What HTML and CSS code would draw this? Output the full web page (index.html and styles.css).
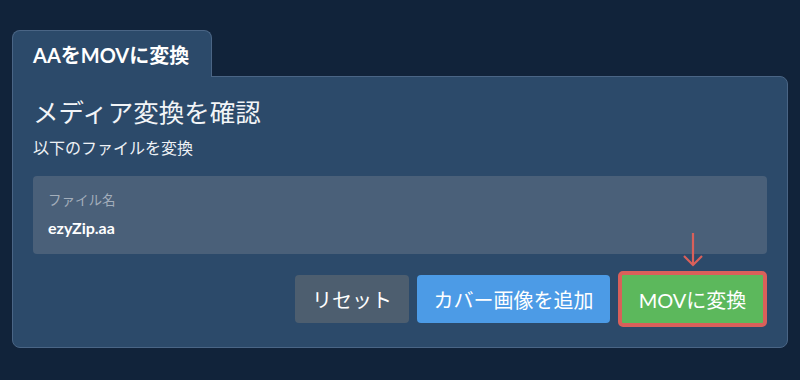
FILE: index.html
```html
<!DOCTYPE html>
<html lang="ja">
<head>
<meta charset="utf-8">
<title>AAをMOVに変換</title>
<link rel="stylesheet" href="styles.css">
</head>
<body>
<div class="wrap">
  <div class="tab">AAをMOVに変換</div>
  <div class="panel">
    <h1 class="title">メディア変換を確認</h1>
    <p class="subtitle">以下のファイルを変換</p>
    <div class="filebox">
      <div class="label">ファイル名</div>
      <div class="filename">ezyZip.aa</div>
    </div>
    <div class="actions">
      <button class="btn btn-reset">リセット</button>
      <button class="btn btn-cover">カバー画像を追加</button>
      <button class="btn btn-convert">MOVに変換
        <svg class="arrow" width="20" height="34" viewBox="0 0 20 34"><path d="M10 0 V32 M1 23 L10 32 L19 23" fill="none" stroke="#d9605a" stroke-width="2.2"/></svg>
      </button>
    </div>
  </div>
</div>
</body>
</html>
```
FILE: styles.css
```css
* { box-sizing: border-box; }
html, body { margin: 0; padding: 0; }
body {
  background: #11233a;
  width: 800px;
  height: 380px;
  overflow: hidden;
  font-family: "Lato", "Noto Sans CJK JP", sans-serif;
  color: #ffffff;
}
.wrap {
  padding: 30px 0 0 12px;
  width: 788px;
}
.tab {
  width: 200px;
  height: 47px;
  margin-bottom: -1px;
  position: relative;
  z-index: 1;
  background: #2c4a6a;
  border: 1px solid #4a6585;
  border-bottom: none;
  border-radius: 8px 8px 0 0;
  padding: 0 0 0 20px;
  display: flex;
  align-items: center;
  font-size: 20px;
  font-weight: 700;
}
.panel {
  background: #2c4a6a;
  border: 1px solid #4a6585;
  border-radius: 0 8px 8px 8px;
  padding: 20px 20px 20px 20px;
  height: 272px;
}
.title {
  margin: 0;
  font-size: 25.5px;
  line-height: 30px;
  font-weight: 400;
  color: #f2f4f7;
}
.subtitle {
  margin: 10px 0 0 0;
  font-size: 16px;
  line-height: 21px;
  color: #eef1f5;
}
.filebox {
  margin-top: 18px;
  height: 78px;
  background: #4a6079;
  border-radius: 4px;
  padding: 15px 15px;
}
.label {
  font-size: 13.5px;
  line-height: 19px;
  color: #a3aebb;
}
.filename {
  margin-top: 7px;
  font-size: 16px;
  line-height: 21px;
  font-weight: 700;
}
.actions {
  margin-top: 17px;
  display: flex;
  justify-content: flex-end;
  align-items: center;
  gap: 8px;
}
.btn {
  font-family: "Lato", "Noto Sans CJK JP", sans-serif;
  font-size: 20px;
  color: #ffffff;
  border: none;
  border-radius: 4px;
  height: 48px;
  padding: 0;
  display: flex;
  align-items: center;
  justify-content: center;
}
.btn-reset { background: #4d5e6f; width: 114px; }
.btn-cover { background: #4c9be6; width: 193px; }
.btn-convert {
  position: relative;
  background: #5cb85c;
  border: 4px solid #d9605a;
  border-radius: 5px;
  height: 56px;
  width: 149px;
}
.arrow {
  position: absolute;
  left: 50%;
  margin-left: -10px;
  bottom: calc(100% + 8px);
}
```
